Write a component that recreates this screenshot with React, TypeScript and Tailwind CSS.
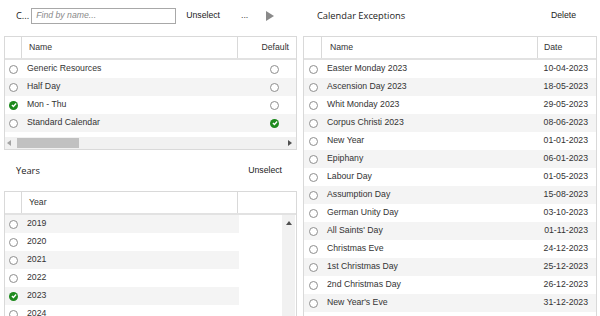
import React from "react";

const Radio = ({ checked }: { checked?: boolean }) =>
  checked ? (
    <span className="w-[9px] h-[9px] rounded-full bg-[#1d8a1d] flex items-center justify-center shrink-0">
      <svg width="6" height="6" viewBox="0 0 6 6">
        <path d="M0.9 3.1 L2.4 4.5 L5.1 1.5" stroke="white" strokeWidth="1.4" fill="none" />
      </svg>
    </span>
  ) : (
    <span className="w-[9px] h-[9px] rounded-full border border-[#8e8e8e] bg-white shrink-0" />
  );

const calendars = [
  { name: "Generic Resources", sel: false, def: false },
  { name: "Half Day", sel: false, def: false },
  { name: "Mon - Thu", sel: true, def: false },
  { name: "Standard Calendar", sel: false, def: true },
];

const years = [
  { y: "2019", sel: false },
  { y: "2020", sel: false },
  { y: "2021", sel: false },
  { y: "2022", sel: false },
  { y: "2023", sel: true },
  { y: "2024", sel: false },
];

const exceptions = [
  ["Easter Monday 2023", "10-04-2023"],
  ["Ascension Day 2023", "18-05-2023"],
  ["Whit Monday 2023", "29-05-2023"],
  ["Corpus Christi 2023", "08-06-2023"],
  ["New Year", "01-01-2023"],
  ["Epiphany", "06-01-2023"],
  ["Labour Day", "01-05-2023"],
  ["Assumption Day", "15-08-2023"],
  ["German Unity Day", "03-10-2023"],
  ["All Saints' Day", "01-11-2023"],
  ["Christmas Eve", "24-12-2023"],
  ["1st Christmas Day", "25-12-2023"],
  ["2nd Christmas Day", "26-12-2023"],
  ["New Year's Eve", "31-12-2023"],
];

export default function App() {
  return (
    <div className="w-[600px] h-[316px] overflow-hidden bg-white flex items-start text-[#333] text-[8.7px] font-['Liberation_Sans',Arial,sans-serif]">
      {/* left column */}
      <div className="w-[303px] pl-[4px] flex flex-col shrink-0">
        <div className="h-[36px] pb-[4px] flex items-center pl-[12px] shrink-0">
          <span className="font-['Open_Sans',sans-serif] text-[9.3px] text-[#222]">C...</span>
          <div className="ml-[2px] w-[145px] h-[16px] border border-[#a8a8a8] flex items-center pl-[4px] italic text-[#8a8a8a]">
            Find by name...
          </div>
          <span className="ml-[10px] text-[#222]">Unselect</span>
          <span className="ml-[21px] text-[#444]">...</span>
          <svg className="ml-[18px]" width="8" height="10" viewBox="0 0 8 10">
            <path d="M0 0 L8 5 L0 10 Z" fill="#8a8a8a" />
          </svg>
        </div>

        <div className="w-[293px] border border-[#d9d9d9] flex flex-col shrink-0">
          <div className="flex h-[23px] border-b-2 border-[#e2e2e2] shrink-0">
            <div className="w-[17px] border-r border-[#d9d9d9]" />
            <div className="w-[216px] border-r border-[#d9d9d9] pl-[7px] flex items-center">Name</div>
            <div className="flex-1 flex items-center justify-end pr-[7px]">Default</div>
          </div>
          {calendars.map((c, i) => (
            <div key={c.name} className={`flex h-[18px] items-center shrink-0 ${i % 2 ? "bg-[#f4f4f4]" : "bg-white"}`}>
              <div className="w-[17px] flex justify-center">
                <Radio checked={c.sel} />
              </div>
              <div className="flex-1 pl-[5px]">{c.name}</div>
              <div className="pr-[17px] flex">
                <Radio checked={c.def} />
              </div>
            </div>
          ))}
          <div className="h-[5px] shrink-0" />
          <div className="h-[12px] bg-[#f1f1f1] flex items-center shrink-0">
            <svg className="ml-[2px]" width="4" height="6" viewBox="0 0 4 6">
              <path d="M4 0 L0 3 L4 6 Z" fill="#a3a3a3" />
            </svg>
            <div className="ml-[6px] w-[62px] h-[10px] bg-[#c1c1c1]" />
            <div className="flex-1" />
            <svg className="mr-[4px]" width="4" height="6" viewBox="0 0 4 6">
              <path d="M0 0 L4 3 L0 6 Z" fill="#505050" />
            </svg>
          </div>
        </div>

        <div className="h-[41px] flex items-center justify-between pl-[12px] pr-[21px] shrink-0">
          <span className="font-['Open_Sans',sans-serif] text-[9.3px] text-[#222]">Years</span>
          <span className="text-[#222]">Unselect</span>
        </div>

        <div className="w-[293px] h-[140px] border border-[#d9d9d9] flex flex-col shrink-0">
          <div className="flex h-[23px] border-b-2 border-[#e2e2e2] shrink-0">
            <div className="w-[17px] border-r border-[#d9d9d9]" />
            <div className="w-[216px] border-r border-[#d9d9d9] pl-[7px] flex items-center">Year</div>
            <div className="flex-1" />
          </div>
          <div className="flex flex-1">
            <div className="flex-1 flex flex-col">
              {years.map((y, i) => (
                <div key={y.y} className={`w-[234px] flex h-[18px] items-center shrink-0 ${i % 2 ? "bg-white" : "bg-[#f4f4f4]"}`}>
                  <div className="w-[17px] flex justify-center">
                    <Radio checked={y.sel} />
                  </div>
                  <div className="pl-[5px]">{y.y}</div>
                </div>
              ))}
            </div>
            <div className="w-[13px] mr-[1px] bg-[#f1f1f1] flex justify-center pt-[6px]">
              <svg width="6" height="4" viewBox="0 0 6 4">
                <path d="M0 4 L3 0 L6 4 Z" fill="#505050" />
              </svg>
            </div>
          </div>
        </div>
      </div>

      {/* right column */}
      <div className="w-[294px] flex flex-col shrink-0">
        <div className="h-[36px] pb-[4px] flex items-center justify-between pl-[14px] pr-[21px] shrink-0">
          <span className="font-['Open_Sans',sans-serif] text-[9.3px] text-[#222]">Calendar Exceptions</span>
          <span className="text-[#222]">Delete</span>
        </div>
        <div className="w-[294px] h-[290px] border border-[#d9d9d9] flex flex-col shrink-0">
          <div className="flex h-[23px] border-b-2 border-[#e2e2e2] shrink-0">
            <div className="w-[18px] border-r border-[#d9d9d9]" />
            <div className="w-[216px] border-r border-[#d9d9d9] pl-[8px] flex items-center">Name</div>
            <div className="flex-1 flex items-center pl-[6px]">Date</div>
          </div>
          {exceptions.map(([name, date], i) => (
            <div key={name} className={`flex h-[18px] items-center shrink-0 ${i % 2 ? "bg-[#f4f4f4]" : "bg-white"}`}>
              <div className="w-[18px] flex justify-center">
                <Radio />
              </div>
              <div className="flex-1 pl-[5px]">{name}</div>
              <div className="pr-[8px]">{date}</div>
            </div>
          ))}
        </div>
      </div>
    </div>
  );
}
